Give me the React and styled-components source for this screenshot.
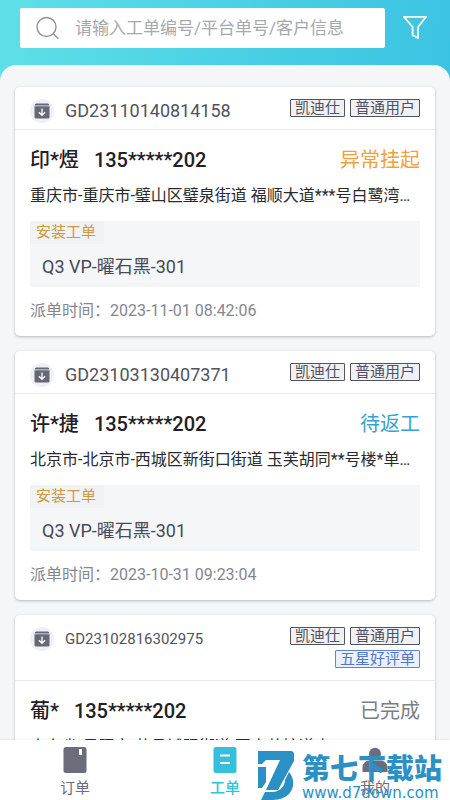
import React from "react";
import styled, { createGlobalStyle } from "styled-components";

const GlobalStyle = createGlobalStyle`
  * {
    box-sizing: border-box;
  }
  body {
    margin: 0;
    font-family: Roboto, "Noto Sans CJK SC", sans-serif;
  }
  h2, p {
    margin: 0;
  }
`;

const Page = styled.div`
  display: flex;
  flex-direction: column;
  height: 100vh;
  overflow: hidden;
  background: linear-gradient(100deg, #5fe0e8 0%, #45cde4 50%, #33bce0 100%);
`;

const Header = styled.header`
  display: flex;
  align-items: center;
  flex-shrink: 0;
  gap: 16px;
  padding: 8px 21px 17px 20px;
`;

const SearchBox = styled.label`
  display: flex;
  flex: 1;
  align-items: center;
  gap: 15px;
  height: 40px;
  padding: 0 16px;
  border-radius: 2px;
  background-color: #fff;
`;

const SearchInput = styled.input`
  flex: 1;
  min-width: 0;
  padding: 0;
  border: 0;
  outline: 0;
  background: none;
  color: #333;
  font-family: inherit;
  font-size: 17px;
  line-height: 24px;
  &::placeholder {
    color: #a6a8ae;
    opacity: 1;
  }
`;

const FilterButton = styled.button`
  display: flex;
  padding: 0;
  border: 0;
  background: none;
`;

const Sheet = styled.main`
  flex: 1;
  min-height: 0;
  overflow: hidden;
  padding: 22px 15px 0;
  border-radius: 16px 16px 0 0;
  background-color: #f5f6f8;
`;

const List = styled.div`
  display: flex;
  flex-direction: column;
  gap: 15px;
`;

const Card = styled.article`
  border-radius: 5px;
  background-color: #fff;
  box-shadow: 0 1px 3px rgba(0, 0, 0, 0.25);
`;

const CardTop = styled.div`
  display: flex;
  justify-content: space-between;
  gap: 12px;
  padding: 12px 15px;
  border-bottom: 1px solid #e8e9ec;
`;

const OrderNo = styled.div`
  display: flex;
  align-items: center;
  gap: 11px;
  height: 24px;
  margin-bottom: -6px;
  color: #50535c;
  font-size: ${(props) => (props.$small ? "15px" : "18px")};
  line-height: 24px;
`;

const RoundIcon = styled.span`
  display: flex;
  align-items: center;
  justify-content: center;
  width: 24px;
  height: 24px;
  border-radius: 50%;
  background-color: #eef0f6;
`;

const Tags = styled.div`
  display: flex;
  flex-wrap: wrap;
  justify-content: flex-end;
  gap: 5px;
  max-width: 140px;
`;

const Tag = styled.span`
  height: 18px;
  padding: 0 4px;
  border: 1px solid ${(props) => (props.$blue ? "#5b83d6" : "#50535f")};
  border-radius: 1px;
  background-color: ${(props) => (props.$blue ? "#eaf1fd" : "#f0f1f5")};
  color: ${(props) => (props.$blue ? "#5277cc" : "#50535f")};
  font-size: 15px;
  line-height: 16px;
`;

const CardBody = styled.div`
  padding: 15px 15px 13px;
`;

const Row = styled.div`
  display: flex;
  justify-content: space-between;
  line-height: 30px;
`;

const Customer = styled.h2`
  display: flex;
  gap: 15px;
  color: #1f2023;
  font-size: 20px;
  font-weight: 500;
`;

const Status = styled.span`
  color: ${(props) => props.$color};
  font-size: 20px;
`;

const Address = styled.p`
  overflow: hidden;
  margin-top: 9px;
  color: #2a2b2e;
  font-size: 16px;
  line-height: 24px;
  text-overflow: ellipsis;
  white-space: nowrap;
`;

const Goods = styled.div`
  margin-top: 13px;
  background-color: #f5f6f8;
`;

const GoodsType = styled.span`
  display: inline-block;
  padding: 0 8px 0 6px;
  background-color: #f1f2f4;
  color: #cb9a42;
  font-size: 15px;
  line-height: 23px;
  vertical-align: top;
`;

const GoodsName = styled.p`
  padding: 11px 12px 8px;
  color: #474a55;
  font-size: 18px;
  line-height: 24px;
`;

const Time = styled.p`
  margin-top: 12px;
  color: #84868f;
  font-size: 16px;
  line-height: 24px;
`;

const TabBar = styled.nav`
  position: relative;
  display: grid;
  grid-template-columns: repeat(3, 1fr);
  flex-shrink: 0;
  height: 60px;
  background-color: #fff;
  box-shadow: 0 -1px 2px rgba(0, 0, 0, 0.05);
`;

const Tab = styled.a`
  display: flex;
  flex-direction: column;
  align-items: center;
  gap: 3px;
  padding-top: 6px;
  color: ${(props) => (props.$active ? "#36bfdc" : "#6b6d7a")};
  font-size: 15px;
  font-weight: ${(props) => (props.$active ? 500 : 400)};
  line-height: 22px;
  text-decoration: none;
`;

const Watermark = styled.div`
  position: absolute;
  right: 8px;
  bottom: 0;
  display: flex;
  align-items: flex-end;
  gap: 8px;
  color: #2b90c4;
  pointer-events: none;
`;

const WatermarkText = styled.div`
  display: flex;
  flex-direction: column;
`;

const SiteName = styled.span`
  font-size: 28px;
  font-weight: 900;
  line-height: 32px;
`;

const SiteUrl = styled.span`
  font-family: "DejaVu Sans", sans-serif;
  font-size: 15px;
  line-height: 14px;
`;

const orders = [
  {
    no: "GD23110140814158",
    tags: ["凯迪仕", "普通用户"],
    name: "印*煜",
    phone: "135*****202",
    status: "异常挂起",
    color: "#f0a040",
    address: "重庆市-重庆市-璧山区璧泉街道 福顺大道***号白鹭湾小区",
    goods: "Q3 VP-曜石黑-301",
    time: "2023-11-01 08:42:06",
  },
  {
    no: "GD23103130407371",
    tags: ["凯迪仕", "普通用户"],
    name: "许*捷",
    phone: "135*****202",
    status: "待返工",
    color: "#36a3cc",
    address: "北京市-北京市-西城区新街口街道 玉芙胡同**号楼*单元***",
    goods: "Q3 VP-曜石黑-301",
    time: "2023-10-31 09:23:04",
  },
  {
    no: "GD23102816302975",
    small: true,
    tags: ["凯迪仕", "普通用户", "五星好评单"],
    name: "葡*",
    phone: "135*****202",
    status: "已完成",
    color: "#7b7d85",
    address: "山东省-日照市-莒县城阳街道 夏古英塘道卢",
    goods: "Q3 VP-曜石黑-301",
    time: "2023-10-28 16:30:29",
  },
];

function SearchIcon() {
  return (
    <svg width="24" height="24" viewBox="0 0 24 24" fill="none" stroke="#8f9299" strokeWidth="1.4">
      <circle cx="10.5" cy="11" r="9.5" />
      <path d="M17.3 17.8l4.7 4.5" strokeLinecap="round" />
    </svg>
  );
}

function FilterIcon() {
  return (
    <svg width="28" height="26" viewBox="0 0 28 26" fill="none" stroke="#fff" strokeWidth="1.8">
      <path d="M3 1.8h22.2L17 12v11.2l-5.4-3.3V12z" strokeLinejoin="round" />
    </svg>
  );
}

function BoxIcon() {
  return (
    <svg width="16" height="16" viewBox="0 0 16 16">
      <path d="M2.2 0.5h11.6a1 1 0 0 1 .8.5l.9 1.5H.5L1.4 1a1 1 0 0 1 .8-.5z" fill="#666975" />
      <path d="M0.5 3.2h15v10.9a1.5 1.5 0 0 1-1.5 1.5H2a1.5 1.5 0 0 1-1.5-1.5z" fill="#666975" />
      <path d="M8 5.5v6.6M4.9 9.3L8 12.3l3.1-3" fill="none" stroke="#fff" strokeWidth="1.3" />
    </svg>
  );
}

function BookIcon() {
  return (
    <svg width="24" height="28" viewBox="0 0 24 28">
      <rect x="0.5" y="1" width="23" height="26" rx="2.5" fill="#6b6d7a" />
      <rect x="16" y="3" width="3" height="6" fill="#fff" />
    </svg>
  );
}

function WorkIcon() {
  return (
    <svg width="24" height="28" viewBox="0 0 24 28">
      <rect x="0.5" y="1" width="23" height="26" rx="2.5" fill="#36bfdc" />
      <path d="M7 9.5h10M7 17h10" stroke="#fff" strokeWidth="2.2" />
    </svg>
  );
}

function UserIcon() {
  return (
    <svg width="26" height="28" viewBox="0 0 26 28" fill="#6b6d7a">
      <circle cx="13" cy="7.8" r="6" />
      <path d="M0.5 26v-4.5a7 7 0 0 1 7-7h11a7 7 0 0 1 7 7V26z" />
    </svg>
  );
}

function SiteLogo() {
  return (
    <svg width="36" height="49" viewBox="0 0 36 49" fill="#2b90c4">
      <path d="M3 0h31l2 2v8L20 39H8L22 9H8l-4 4H0V0z" />
      <path d="M0 16h8v15l-4 6H0z" />
      <path d="M31 21c9 10 4 28-16 28H3l4-8h7c8 0 13-6 13-12z" />
    </svg>
  );
}

function OrderCard({ order }) {
  return (
    <Card>
      <CardTop>
        <OrderNo $small={order.small}>
          <RoundIcon>
            <BoxIcon />
          </RoundIcon>
          {order.no}
        </OrderNo>
        <Tags>
          {order.tags.map((tag) => (
            <Tag key={tag} $blue={tag === "五星好评单"}>
              {tag}
            </Tag>
          ))}
        </Tags>
      </CardTop>
      <CardBody>
        <Row>
          <Customer>
            <span>{order.name}</span>
            <span>{order.phone}</span>
          </Customer>
          <Status $color={order.color}>{order.status}</Status>
        </Row>
        <Address>{order.address}</Address>
        <Goods>
          <GoodsType>安装工单</GoodsType>
          <GoodsName>{order.goods}</GoodsName>
        </Goods>
        <Time>派单时间：{order.time}</Time>
      </CardBody>
    </Card>
  );
}

export default function App() {
  return (
    <>
      <GlobalStyle />
      <Page>
        <Header>
          <SearchBox>
            <SearchIcon />
            <SearchInput
              type="text"
              aria-label="搜索"
              placeholder="请输入工单编号/平台单号/客户信息"
            />
          </SearchBox>
          <FilterButton type="button" aria-label="筛选">
            <FilterIcon />
          </FilterButton>
        </Header>
        <Sheet>
          <List>
            {orders.map((order) => (
              <OrderCard key={order.no} order={order} />
            ))}
          </List>
        </Sheet>
        <TabBar>
          <Tab href="#orders">
            <BookIcon />
            订单
          </Tab>
          <Tab href="#work" $active>
            <WorkIcon />
            工单
          </Tab>
          <Tab href="#mine">
            <UserIcon />
            我的
          </Tab>
          <Watermark>
            <SiteLogo />
            <WatermarkText>
              <SiteName>第七下载站</SiteName>
              <SiteUrl>www.d7down.com</SiteUrl>
            </WatermarkText>
          </Watermark>
        </TabBar>
      </Page>
    </>
  );
}
